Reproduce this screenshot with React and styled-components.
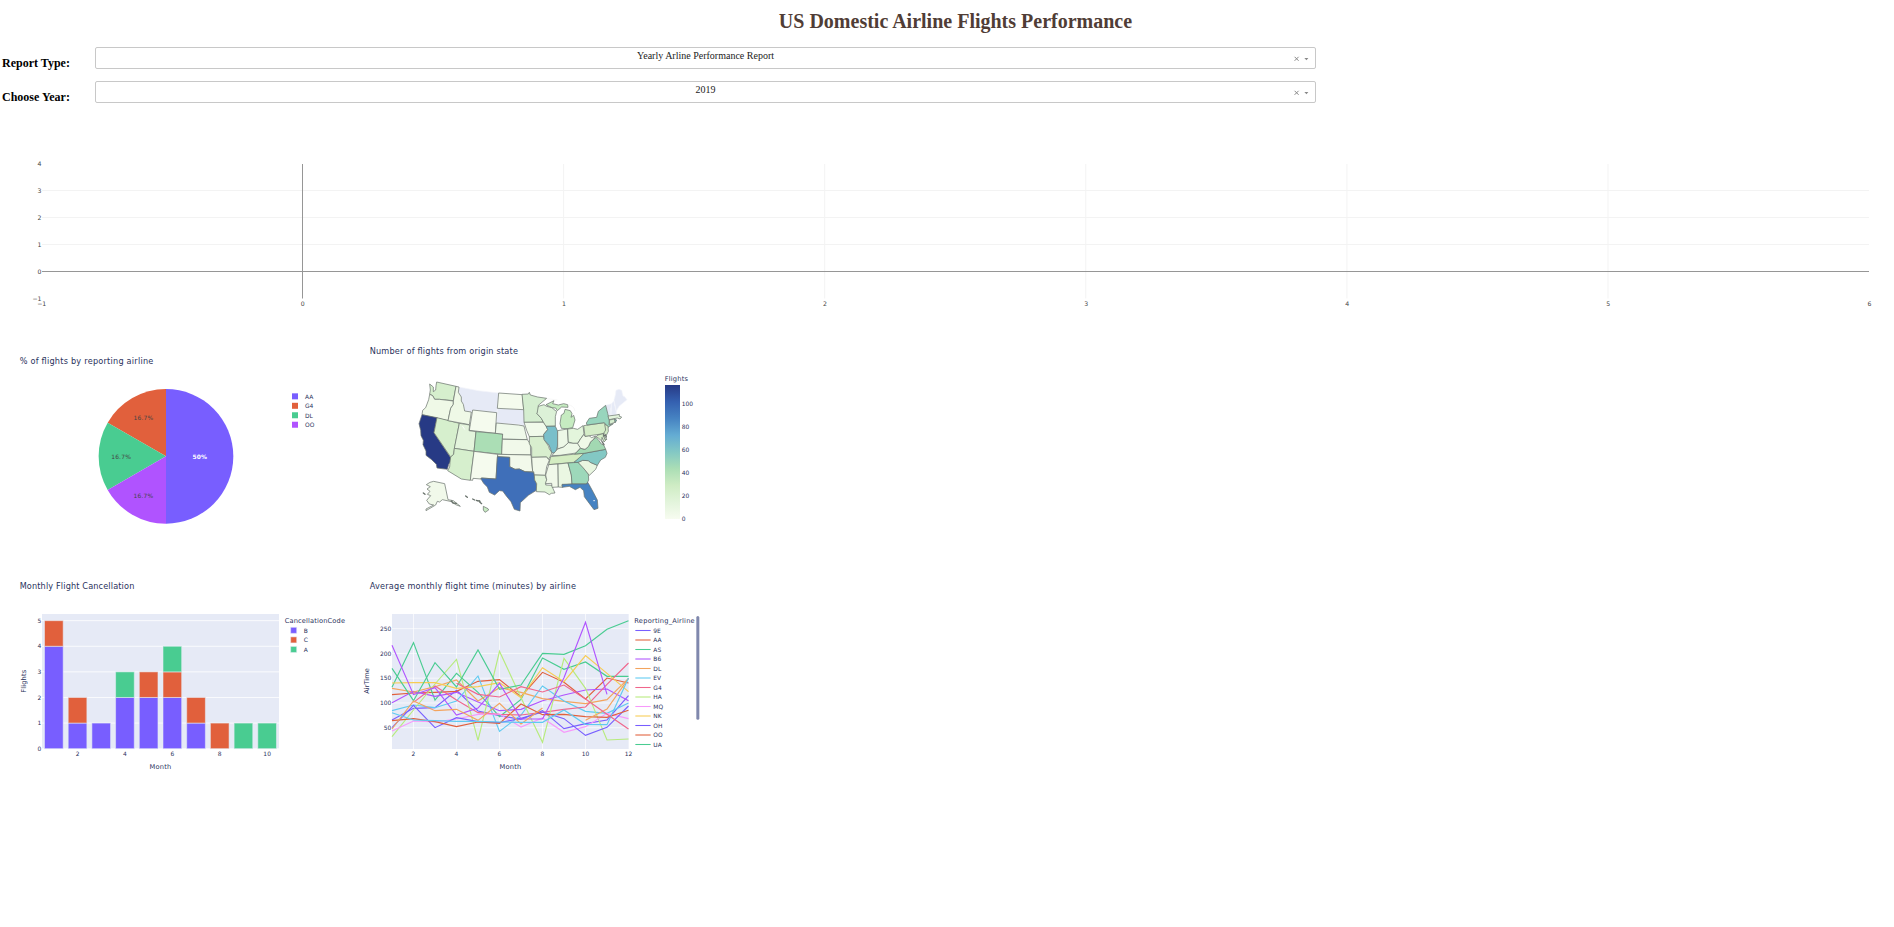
import React from "react";
import styled, { createGlobalStyle } from "styled-components";

const GlobalStyle = createGlobalStyle`
  body {
    margin: 0;
    background: #fff;
    font-family: "Liberation Serif", "Times New Roman", serif;
    color: #000;
  }
`;

const Page = styled.main`
  width: 1894px;
  height: 927px;
  overflow: hidden;
  background: #fff;
`;

const Title = styled.h1`
  margin: 0;
  padding: 10px 0 0 17px;
  height: 38px;
  box-sizing: border-box;
  text-align: center;
  color: #503d36;
  font-size: 20px;
  line-height: 23px;
`;

const Field = styled.div`
  display: flex;
  height: 22px;
  margin-bottom: 12px;
`;

const Controls = styled.section`
  padding-top: 9px;
  height: 87px;
  box-sizing: border-box;
`;

const FieldLabel = styled.h2`
  margin: 0;
  padding: 9px 0 0 2px;
  box-sizing: border-box;
  width: 95px;
  flex: none;
  font-size: 12px;
  line-height: 14px;
  white-space: nowrap;
`;

const Select = styled.div`
  display: grid;
  grid-template-columns: 1fr auto;
  width: 1221px;
  height: 22px;
  box-sizing: border-box;
  border: 1px solid #c8c8c8;
  border-radius: 2px;
`;

const SelectValue = styled.span`
  padding: 2px 0 0 24px;
  text-align: center;
  font-size: 10px;
  line-height: 12px;
  color: #222;
`;

const SelectIcons = styled.svg`
  width: 24px;
  height: 20px;
`;

const WideChart = styled.svg`
  display: block;
  width: 1894px;
  height: 215px;
`;

const ChartGrid = styled.section`
  display: grid;
  grid-template-columns: 360px 360px;
  grid-template-rows: 200px 210px;
  row-gap: 30px;
`;

const Chart = styled.svg`
  display: block;
  width: 100%;
  height: 100%;
`;

const Label = styled.text`
  font-family: "DejaVu Sans", Verdana, sans-serif;
  font-size: ${(p) => p.$size || 17.8}px;
  font-weight: ${(p) => (p.$bold ? 700 : 400)};
  fill: ${(p) => p.$color || "#2a325c"};
  text-anchor: ${(p) => p.$anchor || "start"};
`;

const C = {
  indigo: "#785eff",
  red: "#e1603c",
  green: "#49cc91",
  purple: "#b053ff",
  orange: "#f3a45e",
  cyan: "#5fcaf1",
  rose: "#f0668c",
  lime: "#b7eb7c",
  pink: "#f799fb",
  yellow: "#f7cc53",
  plot: "#e6eaf6",
};

function Dropdown({ label, value }) {
  return (
    <Field>
      <FieldLabel>{label}</FieldLabel>
      <Select>
        <SelectValue>{value}</SelectValue>
        <SelectIcons viewBox="0 0 24 20">
          <path d="M3.600 8.800l4 4M7.600 8.800l-4 4" stroke="#888" strokeWidth="1" />
          <path d="M13.400 10h4l-2 2.200z" fill="#888" />
        </SelectIcons>
      </Select>
    </Field>
  );
}

function EmptyChart() {
  const xs = [-1, 0, 1, 2, 3, 4, 5, 6];
  const ys = [4, 3, 2, 1, 0, -1];
  const px = (v) => 302.5 + v * 261.1;
  const py = (v) => 271.5 - v * 27 - 125;
  const fmt = (v) => String(v).replace("-", "\u2212");
  return (
    <WideChart viewBox="0 0 1894 215">
      {[1, 2, 3, 4, 5].map((v) => (
        <line key={v} x1={px(v)} x2={px(v)} y1={39} y2={173.5} stroke="#f3f3f3" />
      ))}
      {[1, 2, 3].map((v) => (
        <line key={v} x1={42} x2={1869} y1={py(v)} y2={py(v)} stroke="#f3f3f3" />
      ))}
      <line x1={42} x2={1869} y1={py(0)} y2={py(0)} stroke="#969696" />
      <line x1={302.5} x2={302.5} y1={39} y2={173.5} stroke="#969696" />
      {ys.map((v) => (
        <Label key={v} x={41.5} y={py(v) + 2.2} $size={6.2} $anchor="end" $color="#444">{fmt(v)}</Label>
      ))}
      {xs.map((v) => (
        <Label key={v} x={px(v) + 0.3} y={181} $size={6.2} $anchor="middle" $color="#444">{fmt(v)}</Label>
      ))}
    </WideChart>
  );
}

function PieChart() {
  const legend = [["AA", C.indigo], ["G4", C.red], ["DL", C.green], ["OO", C.purple]];
  return (
    <Chart viewBox="0 0 1080 600">
      <Label x="59" y="71.5" $size={24.5} textLength="401">% of flights by reporting airline</Label>
      <path d="M498 349V147A202 202 0 0 1 498 551Z" fill={C.indigo} />
      <path d="M498 349L323 248A202 202 0 0 1 498 147Z" fill={C.red} />
      <path d="M498 349L323 450A202 202 0 0 1 323 248Z" fill={C.green} />
      <path d="M498 349V551A202 202 0 0 1 323 450Z" fill={C.purple} />
      <Label x="599" y="357" $anchor="middle" $color="#fff" $bold textLength="43">50%</Label>
      <Label x="430" y="240" $anchor="middle" $color="#444" textLength="59">16.7%</Label>
      <Label x="363" y="357" $anchor="middle" $color="#444" textLength="59">16.7%</Label>
      <Label x="430" y="474" $anchor="middle" $color="#444" textLength="59">16.7%</Label>
      {legend.map(([name, color], i) => (
        <g key={name}>
          <rect x="876" y={160 + i * 28.4} width="18" height="18" fill={color} />
          <Label x="915" y={176 + i * 28.4}>{name}</Label>
        </g>
      ))}
    </Chart>
  );
}

const NONE = "#e6eaf6";
const states = [
  ["WA", "#d6efcd", "110,51 168,64 160,107 140,105 118,103 104,103 98,92 89,88 91,75 89,57 100,66 100,80 107,75 108,62"],
  ["OR", "#eff9e7", "89,88 98,92 104,103 118,103 160,108 160,118 152,130 144,167 66,149 68,136 77,128 86,104"],
  ["CA", "#273a85", "66,149 111,158 102,203 152,278 150,292 146,298 142,313 111,309 109,298 95,284 78,271 78,258 69,239 70,226 63,212 62,196 57,176"],
  ["NV", "#d6efcd", "111,158 178,175 163,252 161,268 152,276 102,203"],
  ["ID", "#eff9e7", "168,64 177,66 175,82 184,96 184,108 190,118 194,138 214,141 208,179 144,167 152,130 160,118 160,108"],
  ["WY", "#f5fbee", "218,135 290,143 286,205 208,196"],
  ["UT", "#e3f4dc", "178,175 209,180 207,197 228,200 222,259 163,250"],
  ["CO", "#abdeb5", "228,200 308,207 305,268 222,259"],
  ["AZ", "#d6efcd", "163,250 222,259 211,346 184,342 143,317 149,306 150,292 152,276 161,268"],
  ["NM", "#f5fbee", "222,259 293,268 288,342 244,339 243,342 219,340 218,346 211,345"],
  ["ND", "#f5fbee", "296,84 367,89 371,134 292,130"],
  ["NE", "#eff9ea", "289,174 355,180 372,183 376,200 382,224 307,222 308,207 286,205"],
  ["KS", "#f1f9ea", "307,223 382,224 391,237 392,270 305,268"],
  ["OK", "#f2f9eb", "293,268 393,270 398,320 375,320 358,312 345,313 329,305 329,277 293,275"],
  ["TX", "#3f6fb9", "292,275 329,277 329,305 345,313 358,312 375,320 402,322 404,345 410,356 409,376 385,391 361,413 360,438 343,433 333,410 319,393 308,378 298,377 284,390 268,382 262,366 251,355 243,342 244,339 288,342"],
  ["MN", "#d5eed0", "366,88 385,87 388,82 391,90 413,96 440,100 415,121 415,137 411,146 424,160 430,171 372,172 371,134"],
  ["IA", "#f1faeb", "372,172 430,172 440,184 443,194 432,207 432,214 388,215 380,196"],
  ["MO", "#d8eece", "388,215 430,214 435,228 446,244 448,252 456,263 450,276 445,283 440,276 395,277 395,248 388,236"],
  ["AR", "#f1f9ea", "395,277 440,276 445,283 449,283 440,305 436,331 403,330 401,320 398,320"],
  ["LA", "#e1f4d9", "403,330 436,331 440,345 437,360 457,361 459,371 465,384 454,385 448,389 435,381 409,380 410,356 404,345"],
  ["WI", "#dcf1d7", "415,124 432,119 440,124 456,128 465,136 470,139 466,155 466,183 438,184 430,171 424,160 411,146"],
  ["IL", "#79bfca", "438,184 466,184 473,199 473,231 472,245 467,263 456,264 447,240 432,224 431,208 443,194"],
  ["MI", "#c6ebc1", "438,119 462,107 458,116 475,120 491,116 503,119 504,127 485,126 472,137 467,129 456,128 448,124"],
  ["MI2", "#c6ebc1", "484,190 480,176 484,150 492,145 495,133 511,137 516,146 513,157 521,151 525,165 518,188 501,191"],
  ["IN", "#edf8e7", "473,197 502,192 505,234 491,246 473,252"],
  ["OH", "#e3f5dc", "503,192 520,190 533,193 549,182 552,207 542,221 533,235 519,235 505,231"],
  ["KY", "#edf8e7", "455,272 466,260 473,252 491,246 505,233 519,235 533,235 542,248 528,264 480,271"],
  ["TN", "#d4edc2", "452,275 528,267 552,265 546,275 522,292 446,299"],
  ["MS", "#f1f9ea", "446,299 474,297 475,366 456,367 455,355 436,356 440,344 437,330"],
  ["AL", "#eaf7e2", "474,297 504,294 514,330 516,357 486,360 488,367 475,366"],
  ["GA", "#9dd8ba", "504,294 534,292 550,307 565,327 566,345 560,357 516,357 514,330"],
  ["FL", "#4683c2", "486,358 516,357 560,357 563,352 568,360 580,382 592,405 594,430 582,434 573,422 564,410 553,395 551,377 540,367 526,374 508,364 487,367"],
  ["SC", "#e9f6e0", "534,292 548,286 565,287 571,292 592,301 587,313 568,331 550,309"],
  ["NC", "#83c8c4", "552,265 617,253 621,265 616,277 602,285 592,301 571,292 565,287 548,286 534,292 522,292 538,278"],
  ["VA", "#a2d8b2", "524,267 542,250 555,253 565,245 572,230 588,217 597,227 604,237 611,240 617,253 552,265"],
  ["WV", "#eff9e7", "533,236 542,221 552,208 555,214 567,212 575,218 587,213 579,225 572,230 565,245 555,253 542,250"],
  ["PA", "#d5edc8", "551,182 613,173 620,183 617,194 620,199 611,206 555,214"],
  ["NY", "#98d5bd", "559,174 568,160 590,157 595,139 617,121 623,145 628,165 627,180 640,176 624,187 613,173 561,180"],
  ["NJ", "#d5edc8", "614,178 624,183 625,199 619,211 611,205 617,195"],
  ["MD", "#d5edc8", "588,215 594,210 610,206 614,220 620,223 612,231 606,217 605,228 596,220"],
  ["DE", "#e6f5df", "610,206 620,223 614,223"],
  ["MA", "#e3f4dc", "624,153 648,150 658,148 658,154 665,156 660,162 652,159 627,164"],
  ["CT", "#d5eed0", "628,165 644,162 645,172 629,178"],
  ["RI", "#83c8c4", "644,162 650,165 646,173"],
  ["AK", "#f1f9ea", "90,352 101,349 134,356 144,404 160,407 181,424 167,419 155,410 127,404 119,411 112,409 107,420 78,437 78,432 101,420 88,417 80,406 92,392 82,388 90,379 81,372 91,365 79,359"],
  ["HI", "#c8ebc3", "250,424 264,431 266,435 255,442 250,435"],
];
const islands = [
  "70,384 75,388", "197,393 202,397", "218,402 224,405", "229,406 235,408", "239,411 245,416", "237,407 240,409", "154,408 159,414 169,415", "610,213 617,210 619,216", "606,230 612,239",
];

function StateMap() {
  return (
    <g transform="translate(120 90)" strokeLinejoin="round">
      <g fill={NONE} stroke="#f3f5fb" strokeWidth="2">
        <polygon points="177,66 235,77 296,84 291,143 218,135 214,141 194,138 190,118 184,108 184,96 175,82" />
        <polygon points="292,130 371,134 372,172 374,183 355,178 289,174" />
        <polygon points="617,121 635,116 632,132 633,150 624,151" />
        <polygon points="635,116 641,108 649,140 648,150 633,150" />
        <polygon points="642,105 646,91 648,76 657,73 665,76 669,93 674,95 681,104 668,115 657,124 649,138" />
      </g>
      <g stroke="#68716b" strokeWidth="2.1">
        {states.map(([id, fill, points]) => (
          <polygon key={id} fill={fill} points={points} />
        ))}
        {islands.map((points) => (
          <polyline key={points} fill="none" strokeWidth="4" strokeLinecap="round" points={points} />
        ))}
      </g>
      <g fill="none" stroke="#fff" strokeWidth="2.5" strokeLinecap="round">
        <path d="M188 184L194 193M581 407h3" />
        <path d="M442 101L472 105M505 119Q522 122 525 137" stroke="#f5f5f5" />
      </g>
    </g>
  );
}

function MapChart() {
  return (
    <Chart viewBox="0 15 1080 600">
      <defs>
        <linearGradient id="flights" x1="0" y1="1" x2="0" y2="0">
          <stop offset="0" stopColor="#f7fcf0" />
          <stop offset="0.125" stopColor="#e3f4dc" />
          <stop offset="0.25" stopColor="#cfecc4" />
          <stop offset="0.375" stopColor="#abdeb5" />
          <stop offset="0.5" stopColor="#83c8c4" />
          <stop offset="0.625" stopColor="#64acd3" />
          <stop offset="0.75" stopColor="#4683c2" />
          <stop offset="0.875" stopColor="#3460b0" />
          <stop offset="1" stopColor="#273a85" />
        </linearGradient>
      </defs>
      <Label x="29" y="56" $size={24.5} textLength="445">Number of flights from origin state</Label>
      <StateMap />
      <Label x="914" y="138" $size={20} textLength="70">Flights</Label>
      <rect x="915" y="150" width="45" height="402" fill="url(#flights)" />
      {[0, 20, 40, 60, 80, 100].map((v) => (
        <Label key={v} x="965" y={558 - v * 3.44}>{v}</Label>
      ))}
    </Chart>
  );
}

function BarChart() {
  const bars = [
    [["indigo", 4], ["red", 1]],
    [["indigo", 1], ["red", 1]],
    [["indigo", 1]],
    [["indigo", 2], ["green", 1]],
    [["indigo", 2], ["red", 1]],
    [["indigo", 2], ["red", 1], ["green", 1]],
    [["indigo", 1], ["red", 1]],
    [["red", 1]],
    [["green", 1]],
    [["green", 1]],
  ];
  const unit = 76.8;
  const rects = bars.flatMap((stack, i) => {
    let base = 0;
    return stack.map(([color, n]) => {
      base += n;
      return { key: `${i}${color}`, x: 133.5 + i * 71.1, y: 536 - base * unit, h: n * unit, color: C[color] };
    });
  });
  return (
    <Chart viewBox="0 0 1080 630">
      <Label x="59" y="56" $size={24.5} textLength="344">Monthly Flight Cancellation</Label>
      <rect x="126" y="132" width="711" height="405" fill={C.plot} />
      {[0, 1, 2, 3, 4, 5].map((v) => (
        <g key={v}>
          <line x1="126" x2="837" y1={536 - v * unit} y2={536 - v * unit} stroke="#fff" strokeOpacity="0.8" strokeWidth="3" />
          <Label x="124" y={542.5 - v * unit} $anchor="end">{v}</Label>
        </g>
      ))}
      {rects.map((r) => (
        <rect key={r.key} x={r.x} y={r.y} width="56" height={r.h} fill={r.color} stroke="#e5ecf6" strokeOpacity="0.55" strokeWidth="3" />
      ))}
      {[2, 4, 6, 8, 10].map((v) => (
        <Label key={v} x={161.5 + (v - 1) * 71.1} y="557" $anchor="middle">{v}</Label>
      ))}
      <Label x="481" y="597" $size={20} $anchor="middle" textLength="65">Month</Label>
      <Label transform="translate(77 334) rotate(-90)" $size={20} $anchor="middle" textLength="69">Flights</Label>
      <Label x="854" y="158" $size={20} textLength="181">CancellationCode</Label>
      {[["B", C.indigo], ["C", C.red], ["A", C.green]].map(([name, color], i) => (
        <g key={name}>
          <rect x="872" y={172 + i * 28.7} width="18" height="18" fill={color} stroke="#e5ecf6" strokeOpacity="0.5" strokeWidth="3" />
          <Label x="911" y={188 + i * 28.7}>{name}</Label>
        </g>
      ))}
    </Chart>
  );
}

const series = [
  ["indigo", 1, [360, 325, 323, 271, 333, 347, 358, 332, 386, 371, 360, 287]],
  ["red", 1, [284, 279, 277, 274, 244, 239, 290, 217, 247, 297, 234, 249]],
  ["green", 1, [262, 128, 300, 220, 277, 350, 298, 174, 208, 186, 229, 229]],
  ["purple", 1, [308, 274, 289, 277, 306, 332, 328, 302, 285, 270, 267, 302]],
  ["orange", 1, [265, 276, 260, 240, 303, 263, 277, 296, 304, 311, 299, 235]],
  ["cyan", 1, [332, 315, 323, 303, 228, 394, 345, 258, 303, 334, 340, 309]],
  ["rose", 2, [307, 258, 300, 338, 343, 345, 337, 328, 321, 253, 189]],
  ["lime", 1, [410, 330, 252, 178, 421, 154, 293, 427, 175, 265, 420, 417]],
  ["pink", 1, [393, 363, 366, 357, 343, 342, 381, 354, 397, 380, 340, 356]],
  ["yellow", 1, [249, 248, 248, 265, 260, 248, 293, 203, 245, 167, 220, 275]],
  ["indigo", 1, [383, 316, 383, 353, 365, 368, 355, 336, 356, 406, 382, 318]],
  ["red", 1, [362, 356, 365, 380, 366, 370, 312, 344, 343, 350, 352, 331]],
  ["green", 1, [205, 302, 188, 261, 150, 268, 255, 160, 163, 137, 88, 62]],
  ["purple", 1, [136, 284, 263, 345, 324, 250, 357, 357, 233, 67, 283]],
  ["orange", 1, [387, 303, 332, 328, 361, 310, 372, 324]],
  ["orange", 10, [361, 327, 235]],
  ["cyan", 1, [338, 360, 362, 364, 364, 366, 367, 367, 330, 373, 374, 234]],
  ["rose", 4, [250, 283, 291, 260, 276, 255, 297, 343, 387]],
];

function LineChart() {
  const px = (m) => 66 + (m - 1) * 64.5;
  const legend = [
    ["9E", "indigo"], ["AA", "red"], ["AS", "green"], ["B6", "purple"], ["DL", "orange"],
    ["EV", "cyan"], ["G4", "rose"], ["HA", "lime"], ["MQ", "pink"], ["NK", "yellow"],
    ["OH", "indigo"], ["OO", "red"], ["UA", "green"],
  ];
  return (
    <Chart viewBox="-30 -90 1080 630">
      <Label x="-1" y="-34" $size={24.5} textLength="619">Average monthly flight time (minutes) by airline</Label>
      <rect x="66" y="42" width="710" height="405" fill={C.plot} />
      {[2, 4, 6, 8, 10].map((m) => (
        <line key={m} x1={px(m)} x2={px(m)} y1="42" y2="447" stroke="#fff" strokeOpacity="0.8" strokeWidth="2.5" />
      ))}
      {[50, 100, 150, 200, 250].map((v) => (
        <g key={v}>
          <line x1="66" x2="776" y1={457.5 - v * 1.486} y2={457.5 - v * 1.486} stroke="#fff" strokeOpacity="0.8" strokeWidth="2.5" />
          <Label x="64" y={464 - v * 1.486} $anchor="end">{v}</Label>
        </g>
      ))}
      {series.map(([color, start, ys], i) => (
        <polyline
          key={i}
          points={ys.map((y, k) => `${px(start + k)},${y}`).join(" ")}
          fill="none"
          stroke={C[color]}
          strokeWidth="3.4"
        />
      ))}
      {[2, 4, 6, 8, 10, 12].map((m) => (
        <Label key={m} x={px(m)} y="467" $anchor="middle">{m}</Label>
      ))}
      <Label x="421" y="507" $size={20} $anchor="middle" textLength="65">Month</Label>
      <Label transform="translate(-4 243) rotate(-90)" $size={20} $anchor="middle" textLength="77">AirTime</Label>
      <Label x="793" y="68" $size={20} textLength="181">Reporting_Airline</Label>
      {legend.map(([name, color], i) => (
        <g key={name}>
          <line x1="796" x2="842" y1={91.5 + i * 28.5} y2={91.5 + i * 28.5} stroke={C[color]} strokeWidth="3.2" />
          <Label x="850" y={98 + i * 28.5}>{name}</Label>
        </g>
      ))}
      <rect x="979" y="48" width="9" height="311" rx="4.5" fill="#8088ad" />
    </Chart>
  );
}

export default function App() {
  return (
    <Page>
      <GlobalStyle />
      <Title>US Domestic Airline Flights Performance</Title>
      <Controls>
        <Dropdown label="Report Type:" value="Yearly Arline Performance Report" />
        <Dropdown label="Choose Year:" value="2019" />
      </Controls>
      <EmptyChart />
      <ChartGrid>
        <PieChart />
        <MapChart />
        <BarChart />
        <LineChart />
      </ChartGrid>
    </Page>
  );
}
